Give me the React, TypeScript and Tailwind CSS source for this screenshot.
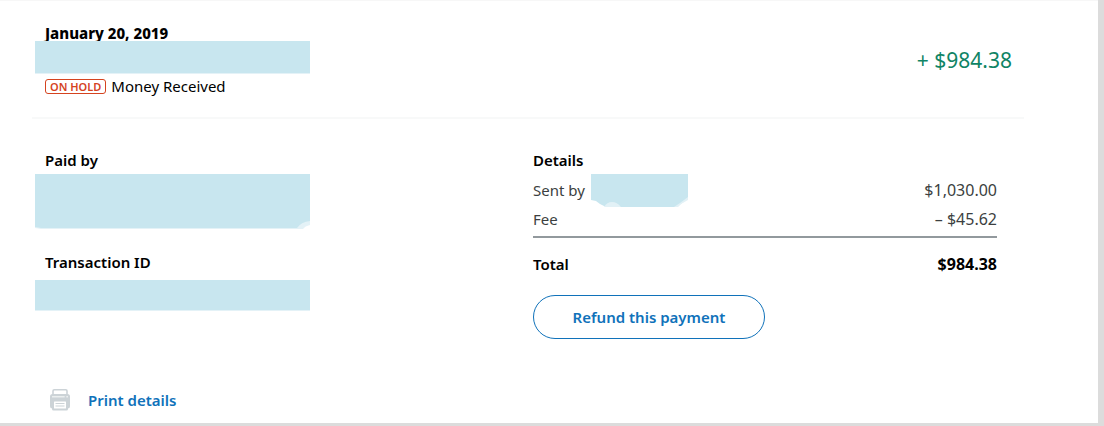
function PrinterIcon() {
  return (
    <svg width="20" height="22" viewBox="0 0 20 22" aria-hidden="true" className="shrink-0">
      <path d="M3 6V2a1.2 1.2 0 0 1 1.2-1.2h11.6A1.2 1.2 0 0 1 17 2V6" fill="none" stroke="#ccd3d7" strokeWidth="1.6" />
      <rect x="0" y="5" width="20" height="14.5" rx="2.5" fill="#ccd3d7" />
      <rect x="2" y="7.2" width="16" height="1.2" fill="#f3f5f6" />
      <circle cx="15.5" cy="8" r="1" fill="#ccd3d7" />
      <rect x="2" y="11" width="16" height="10.5" rx="1.5" fill="#ccd3d7" />
      <rect x="4" y="12.5" width="12" height="7" rx="0.5" fill="#fff" />
      <rect x="5.5" y="14" width="9" height="1" fill="#ccd3d7" />
      <rect x="5.5" y="16.5" width="9" height="1" fill="#ccd3d7" />
    </svg>
  );
}

function SenderCover() {
  return (
    <svg width="97" height="33" viewBox="0 0 97 33" aria-hidden="true" className="-my-2 ml-1.5 shrink-0">
      <path d="M0 0H97V25L91 29L86 33H15L9 30L5 27L0 26Z" fill="#c8e6ef" />
      <path d="M13 33Q16 28 21 28T30 33Z" fill="#e2f1f6" />
      <path d="M97 23V26L90 30L87 33H83L89 29Z" fill="#e2f1f6" />
    </svg>
  );
}

export default function App() {
  return (
    <div className="bg-[#dcdcdc] pr-1.5 pb-[3px] font-['Noto_Sans',sans-serif] text-[15px] leading-5 text-black">
      <main className="border-t border-[#f7f7f7] bg-white pr-[74px] pl-8">
        <header className="flex items-start justify-between border-b-2 border-[#f8f9f9] pr-3 pb-[21px] pl-[3px]">
          <div className="pt-[22px]">
            <h1 className="pl-2.5 font-extrabold">January 20, 2019</h1>
            <div className="relative -mt-0.5 h-[33px] w-[275px] border-b border-[#e4f2f7] bg-[#c8e6ef]" />
            <p className="mt-0.5 flex items-center gap-[5px] pl-2.5">
              <span className="rounded-[3px] border border-[#d5431f] px-1 text-[11px] leading-[13px] font-semibold text-[#d5431f]">
                ON HOLD
              </span>
              Money Received
            </p>
          </div>
          <p className="pt-[45px] text-[21px] leading-7 text-[#0f8465]">+ $984.38</p>
        </header>

        <div className="grid grid-cols-2 pt-[31px]">
          <section className="pl-[3px]">
            <h2 className="pl-2.5 font-semibold">Paid by</h2>
            <svg
              width="275"
              height="55"
              viewBox="0 0 275 55"
              aria-hidden="true"
              className="mt-1 block"
            >
              <path d="M0 0H275V55H6L0 54Z" fill="#e4f2f7" />
              <path d="M0 0H275V47Q266 48 262 54H6L0 53Z" fill="#c8e6ef" />
              <path d="M275 51Q270 52 268 55H275Z" fill="#fff" />
            </svg>
            <h2 className="mt-[23px] pl-2.5 font-semibold">Transaction ID</h2>
            <div className="mt-2 h-[31px] w-[275px] border-b border-[#e4f2f7] bg-[#c8e6ef]" />
          </section>

          <section className="pr-[27px] pl-[5px]">
            <h2 className="font-semibold">Details</h2>
            <table className="mt-[5px] w-full text-[#3c3f41]">
              <tbody>
                <tr>
                  <th scope="row" className="py-[5px] text-left font-normal">
                    <span className="flex h-5 items-center whitespace-nowrap">
                      Sent by
                      <SenderCover />
                    </span>
                  </th>
                  <td className="py-[5px] text-right text-[16px] leading-5">$1,030.00</td>
                </tr>
                <tr className="border-b-2 border-[#92999d]">
                  <th scope="row" className="pt-1 pb-[7px] text-left font-normal">Fee</th>
                  <td className="pt-1 pb-[7px] text-right text-[16px] leading-5">– $45.62</td>
                </tr>
                <tr className="text-black">
                  <th scope="row" className="pt-4 text-left font-semibold">Total</th>
                  <td className="pt-4 text-right text-[16px] leading-5 font-bold">$984.38</td>
                </tr>
              </tbody>
            </table>
            <button
              type="button"
              className="mt-[21px] h-11 w-[232px] rounded-full border border-[#1072ba] font-semibold text-[#1072ba]"
            >
              Refund this payment
            </button>
          </section>
        </div>

        <a href="#print" className="mt-[50px] mb-3 ml-[18px] inline-flex items-center gap-[18px] align-top font-semibold text-[#1072ba]">
          <PrinterIcon />
          Print details
        </a>
      </main>
    </div>
  );
}
